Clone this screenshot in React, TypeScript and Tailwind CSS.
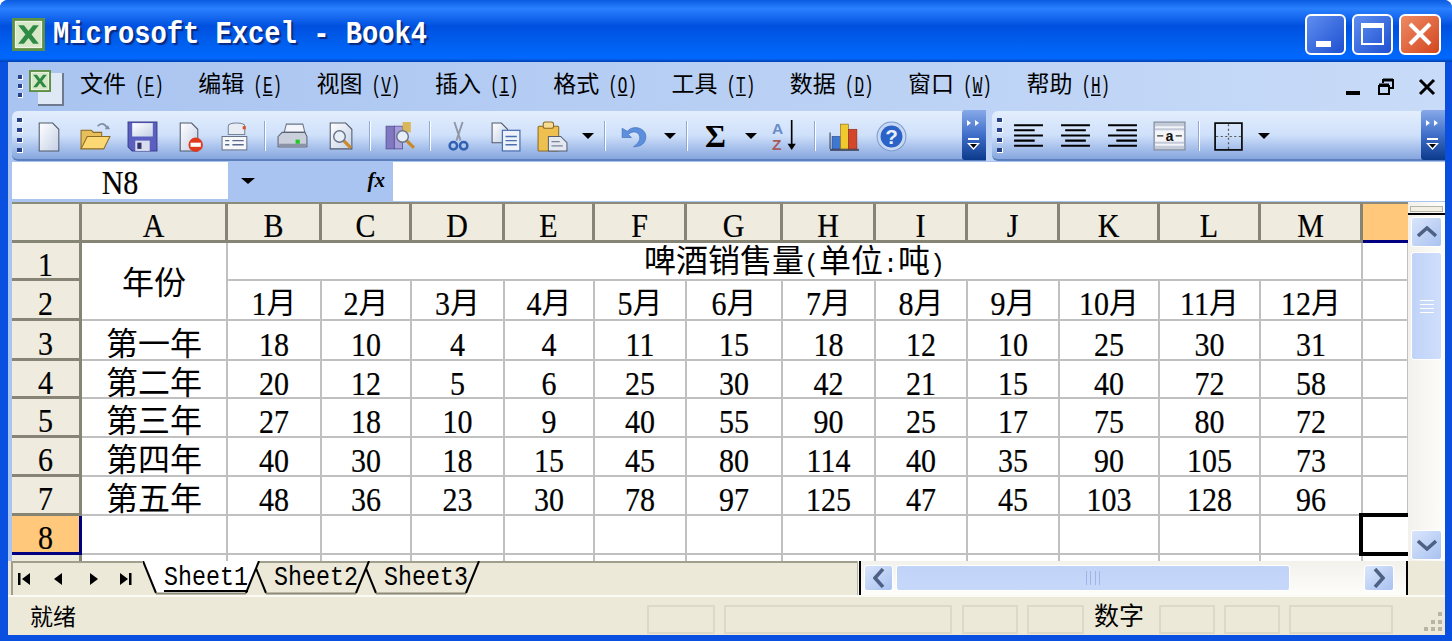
import type { ReactNode } from "react";

const data = [
  ["第一年", "18", "10", "4", "4", "11", "15", "18", "12", "10", "25", "30", "31"],
  ["第二年", "20", "12", "5", "6", "25", "30", "42", "21", "15", "40", "72", "58"],
  ["第三年", "27", "18", "10", "9", "40", "55", "90", "25", "17", "75", "80", "72"],
  ["第四年", "40", "30", "18", "15", "45", "80", "114", "40", "35", "90", "105", "73"],
  ["第五年", "48", "36", "23", "30", "78", "97", "125", "47", "45", "103", "128", "96"],
];
const columns = ["A", "B", "C", "D", "E", "F", "G", "H", "I", "J", "K", "L", "M"];
const months = ["1", "2", "3", "4", "5", "6", "7", "8", "9", "10", "11", "12"];
const menus = [
  ["文件", "F"],
  ["编辑", "E"],
  ["视图", "V"],
  ["插入", "I"],
  ["格式", "O"],
  ["工具", "T"],
  ["数据", "D"],
  ["窗口", "W"],
  ["帮助", "H"],
];

// SimSun-style latin: tall narrow letters
function Lat({ children }: { children: ReactNode }) {
  return (
    <span className="inline-block scale-y-[1.15] text-[30px] leading-none font-['Liberation_Serif',serif] [-webkit-text-stroke:0.2px_#000]">
      {children}
    </span>
  );
}

function Punct({ children }: { children: ReactNode }) {
  return <span className="inline-block text-[25px] leading-none">{children}</span>;
}

function Icon({ children, w = 33 }: { children: ReactNode; w?: number }) {
  return (
    <svg viewBox="0 0 16 16" width={w} height={w}>
      {children}
    </svg>
  );
}

function Slot({ children }: { children: ReactNode }) {
  return <div className="w-[47px] h-full pt-[2px] flex items-center justify-center shrink-0">{children}</div>;
}

function Sep({ className }: { className: string }) {
  return (
    <div className={`h-full pt-[2px] flex items-center justify-center shrink-0 ${className}`}>
      <div className="w-[2px] h-[30px] bg-[#8fa9d6] border-r border-white" />
    </div>
  );
}

function Arrow() {
  return (
    <div className="w-[23px] h-full pt-[2px] flex items-center justify-center shrink-0">
      <div className="w-0 h-0 border-x-[6px] border-x-transparent border-t-[6px] border-t-black" />
    </div>
  );
}

function Gripper() {
  return (
    <div className="w-[8px] ml-[5px] flex flex-col gap-[5px] shrink-0">
      {[0, 1, 2, 3].map((i) => (
        <div key={i} className="w-[6px] h-[5px] bg-[#27418a] border-r border-b border-white" />
      ))}
    </div>
  );
}

function Chevron() {
  return (
    <div className="ml-auto w-[24px] h-[50px] rounded-l-[3px] bg-linear-to-b from-[#87a9e8] via-[#3f6fc9] to-[#0a3a8c] flex flex-col items-center justify-between py-[9px] shrink-0">
      <svg width="16" height="8" viewBox="0 0 16 8">
        <path d="M1 1l4 3-4 3zM9 1l4 3-4 3z" fill="#fff" />
      </svg>
      <svg width="16" height="14" viewBox="0 0 16 14">
        <path d="M2 1h11v2H2z" fill="#fff" />
        <path d="M1 6h13l-6.500 7z" fill="#fff" />
        <path d="M4 7h7l-3.500 4z" fill="#000" />
      </svg>
    </div>
  );
}

function Doc({ x = 3, y = 1, w = 10, h = 14 }: { x?: number; y?: number; w?: number; h?: number }) {
  return (
    <path
      d={`M${x + 0.5} ${y + 0.5}h${w - 3.5}l3 3v${h - 3.5}h-${w - 0.5}z`}
      fill="url(#paper)"
      stroke="#50586a"
      strokeWidth=".5"
    />
  );
}

function ExcelLogo({ size }: { size: number }) {
  return (
    <svg viewBox="0 0 16 16" width={size} height={size}>
      <rect x=".7" y=".7" width="14.600" height="14.600" fill="#eef5e6" stroke="#5d8f46" strokeWidth="1.400" />
      <rect x="2" y="2" width="12" height="12" fill="#d6e8c8" />
      <path d="M3 3.500h2.800L8 6.300l2.200-2.800H13L9.500 8l3.500 4.500h-2.800L8 9.700l-2.200 2.800H3L6.500 8z" fill="#2f8a44" />
    </svg>
  );
}

function Magnifier({ cx, cy }: { cx: number; cy: number }) {
  return (
    <g>
      <path d={`M${cx + 2} ${cy + 2}l3.500 3.500`} stroke="#c98a2c" strokeWidth="1.600" />
      <circle cx={cx} cy={cy} r="2.800" fill="#e6eef8" stroke="#6a7488" strokeWidth=".7" />
    </g>
  );
}

function Toolbar1() {
  return (
    <div className="w-[974px] h-[50px] rounded-l-[6px] flex items-center bg-linear-to-b from-[#e3eefd] via-[#cfe0fa] to-[#86a6de] border-b-2 border-[#5c7fbd] shrink-0">
      <Gripper />
      <Slot>
        <Icon>
          <Doc w={10} />
        </Icon>
      </Slot>
      <Slot>
        <Icon>
          <path d="M1 14V5h5l1 1h4v2" fill="#e7bf5a" stroke="#8b6a23" strokeWidth=".5" />
          <path d="M1 14l3-6h11l-3 6z" fill="#fbd873" stroke="#8b6a23" strokeWidth=".5" />
          <path d="M9 3c2-2 4-1 4.500 1" fill="none" stroke="#7f8ea8" strokeWidth=".8" />
          <path d="M12.500 4.500h2.500l-1 -2z" fill="#7f8ea8" />
        </Icon>
      </Slot>
      <Slot>
        <Icon>
          <path d="M1 1h14v14H3l-2-2z" fill="#5a5fc0" stroke="#3a3d8a" strokeWidth=".5" />
          <rect x="3" y="1.500" width="10" height="6.500" fill="url(#paper)" />
          <rect x="4.500" y="10" width="7" height="5" fill="#d8dcec" />
          <rect x="5.500" y="11" width="2" height="3" fill="#30336e" />
        </Icon>
      </Slot>
      <Slot>
        <Icon>
          <Doc w={9} />
          <circle cx="11" cy="12" r="3.500" fill="#dd3a1e" />
          <rect x="8.500" y="11" width="5" height="2" fill="#fff" />
        </Icon>
      </Slot>
      <Slot>
        <Icon>
          <path d="M4 7V3c0-2 8-2 8 0v4z" fill="#e8ecf4" stroke="#7a8498" strokeWidth=".5" />
          <rect x="11" y="3" width="1.500" height="1.500" fill="#d9502a" />
          <rect x="1" y="8" width="12" height="6.500" fill="#f5f7fb" stroke="#6a7488" strokeWidth=".5" />
          <path d="M2.500 10h2M2.500 12h2M6 10h5.500M6 12h5.500" stroke="#5a6a8a" strokeWidth=".7" />
        </Icon>
      </Slot>
      <Sep className="w-[9px]" />
      <Slot>
        <Icon>
          <path d="M4 6l1-4h8l1 4z" fill="#f3f5fa" stroke="#6a7488" strokeWidth=".5" />
          <path d="M1 8l2-2h11l1 2v5H1z" fill="#c9cfdb" stroke="#5a6274" strokeWidth=".5" />
          <rect x="1.500" y="11.500" width="13" height="2" fill="#8b93a6" />
          <rect x="9.500" y="9.500" width="2" height="2" fill="#21c821" />
        </Icon>
      </Slot>
      <Slot>
        <Icon>
          <Doc w={11} h={13} />
          <Magnifier cx={8} cy={8} />
        </Icon>
      </Slot>
      <Sep className="w-[14px]" />
      <Slot>
        <Icon>
          <rect x="1" y="3" width="4" height="11" fill="#8078c0" stroke="#564f94" strokeWidth=".4" />
          <rect x="5" y="3" width="4" height="11" fill="#a79fda" stroke="#564f94" strokeWidth=".4" />
          <path d="M9 1h4v5H9z" fill="#d9b65a" />
          <Magnifier cx={9} cy={8} />
        </Icon>
      </Slot>
      <Sep className="w-[11px]" />
      <Slot>
        <Icon>
          <path d="M6 1L9 10M10 1L7 10" fill="none" stroke="#8d95a6" strokeWidth=".9" />
          <circle cx="5.500" cy="12.500" r="1.800" fill="none" stroke="#3060b0" strokeWidth="1.200" />
          <circle cx="10.500" cy="12.500" r="1.800" fill="none" stroke="#3060b0" strokeWidth="1.200" />
        </Icon>
      </Slot>
      <Slot>
        <Icon>
          <Doc x={1} y={1} w={8} h={10} />
          <rect x="6.500" y="5" width="8.500" height="10" fill="#eef3fb" stroke="#4a6fb0" strokeWidth=".6" />
          <path d="M8 8h5.500M8 10h5.500M8 12h5.500" stroke="#4a6fb0" strokeWidth=".7" />
        </Icon>
      </Slot>
      <Slot>
        <Icon>
          <rect x="1" y="3" width="10" height="12" rx=".5" fill="#eec04f" stroke="#8b6a23" strokeWidth=".5" />
          <rect x="3.500" y="1" width="5" height="3" rx="1" fill="#f6dc94" stroke="#8b6a23" strokeWidth=".5" />
          <path d="M6 8h6l3 3v4H6z" fill="#e3e8f1" stroke="#555d70" strokeWidth=".5" />
          <path d="M7.500 10.500h4M7.500 12.500h5.500" stroke="#7a8498" strokeWidth=".6" />
        </Icon>
      </Slot>
      <Arrow />
      <Sep className="w-[12px]" />
      <Slot>
        <Icon>
          <path d="M2 4v4.500h4.500L5 7c2-2 5-1.500 5.500 1 .4 2-1 3.500-3 5 4 0 6-2 6-5 0-4-6-6-9-2.500z" fill="#5c8fdd" stroke="#3c68b5" strokeWidth=".3" />
        </Icon>
      </Slot>
      <Arrow />
      <Sep className="w-[11px]" />
      <Slot>
        <span className="text-[32px] leading-none font-bold font-['Liberation_Serif',serif]">Σ</span>
      </Slot>
      <Arrow />
      <div className="w-[46px] h-full pt-[2px] flex items-center justify-center shrink-0">
        <Icon>
          <text x="1.500" y="7" fontSize="7.500" fontWeight="bold" fontFamily="Liberation Sans" fill="#6a8cc8">A</text>
          <text x="1.500" y="14.500" fontSize="7.500" fontWeight="bold" fontFamily="Liberation Sans" fill="#a85a5a">Z</text>
          <path d="M11 0v13" stroke="#000" strokeWidth=".8" />
          <path d="M9 11.500h4l-2 3z" fill="#000" />
        </Icon>
      </div>
      <Sep className="w-[13px]" />
      <Slot>
        <Icon>
          <path d="M1 14.500h14" stroke="#4a5266" strokeWidth="1" />
          <path d="M1 14V6" stroke="#4a5266" strokeWidth=".6" />
          <rect x="2" y="8" width="4" height="6" fill="#3f78d0" stroke="#27418a" strokeWidth=".3" />
          <rect x="6" y="2" width="4" height="12" fill="#f0c92e" stroke="#8b6a23" strokeWidth=".3" />
          <rect x="10" y="4.500" width="4" height="9.500" fill="#d4472a" stroke="#8a2a18" strokeWidth=".3" />
        </Icon>
      </Slot>
      <Slot>
        <Icon>
          <circle cx="8" cy="8" r="7" fill="#c9d8f2" stroke="#7a9ad0" strokeWidth=".5" />
          <circle cx="8" cy="8" r="5.300" fill="#2a62c8" />
          <text x="8" y="11.500" fontSize="10" fontWeight="bold" fontFamily="Liberation Sans" textAnchor="middle" fill="#e8f0ff">?</text>
        </Icon>
      </Slot>
      <Chevron />
    </div>
  );
}

function AlignLines({ kind }: { kind: "l" | "c" | "r" }) {
  const shortStart = kind === "l" ? 1 : kind === "c" ? 3 : 5;
  return (
    <Icon>
      <path
        d={`M1 2.500h14M${shortStart} 5h10M1 7.500h14M${shortStart} 10h10M1 12.500h14`}
        stroke="#000"
        strokeWidth="1"
      />
    </Icon>
  );
}

function Toolbar2() {
  return (
    <div className="flex-1 h-[50px] rounded-l-[6px] flex items-center bg-linear-to-b from-[#e3eefd] via-[#cfe0fa] to-[#86a6de] border-b-2 border-[#5c7fbd]">
      <Gripper />
      <Slot>
        <AlignLines kind="l" />
      </Slot>
      <Slot>
        <AlignLines kind="c" />
      </Slot>
      <Slot>
        <AlignLines kind="r" />
      </Slot>
      <Slot>
        <Icon>
          <rect x=".5" y="1" width="15" height="13.500" fill="#c3cad8" stroke="#7d8596" strokeWidth=".5" />
          <path d="M1 3.500h14M1 12h14" stroke="#f2f4f8" strokeWidth="1" />
          <rect x="1" y="5" width="14" height="5.500" fill="#f4f6fa" />
          <path d="M2 7.700h3M11 7.700h3" stroke="#333" strokeWidth=".7" />
          <text x="8" y="10.200" fontSize="7" fontWeight="bold" fontFamily="Liberation Mono" textAnchor="middle" fill="#111">a</text>
        </Icon>
      </Slot>
      <Sep className="w-[12px]" />
      <Slot>
        <Icon>
          <rect x="1.500" y="1.500" width="13" height="13" fill="none" stroke="#000" strokeWidth=".8" />
          <path d="M8 2v12M2 8h12" stroke="#555" strokeWidth=".6" strokeDasharray="1 1.200" />
        </Icon>
      </Slot>
      <Arrow />
      <Chevron />
    </div>
  );
}

function Cell({ children, className = "" }: { children?: ReactNode; className?: string }) {
  return (
    <div className={`flex items-center justify-center border-r-2 border-b-2 border-[#c0c0c0] ${className}`}>
      {children}
    </div>
  );
}

function RowHead({ n, active }: { n: number; active?: boolean }) {
  return (
    <div
      className={`flex items-center justify-center pt-[6px] border-r-[3px] border-b-[3px] ${
        active ? "bg-[#ffc87a] border-[#000080]" : "bg-[#efecdf] border-[#868474]"
      }`}
    >
      <Lat>{n}</Lat>
    </div>
  );
}

function ColHead({ label }: { label: string }) {
  return (
    <div className="flex items-center justify-center pt-[6px] bg-[#efecdf] border-r-[3px] border-b-[3px] border-[#868474]">
      <Lat>{label}</Lat>
    </div>
  );
}

function SheetGrid() {
  return (
    <div className="w-[1400px] h-full pl-[4px] bg-[#a9c4f0] overflow-hidden shrink-0">
      <div className="h-full bg-white border-t-2 border-[#8c8a78] grid grid-cols-[70px_146px_94px_90px_93px_90px_92px_96px_93px_92px_92px_100px_101px_102px_46px] grid-rows-[39px_38px_40px_40px_38px_39px_39px_39px_39px_6px]">
        <div className="bg-[#efecdf] border-r-[3px] border-b-[3px] border-[#868474]" />
        {columns.map((c) => (
          <ColHead key={c} label={c} />
        ))}
        <div className="bg-[#ffc87a] border-b-[3px] border-[#000080]" />

        <RowHead n={1} />
        <Cell className="row-span-2 text-[32px] leading-none pt-[10px]">年份</Cell>
        <Cell className="col-span-12 text-[32px] leading-none pt-[5px]">
          <span>
            啤酒销售量<Punct>(</Punct>单位<Punct>:</Punct>吨<Punct>)</Punct>
          </span>
        </Cell>
        <Cell />

        <RowHead n={2} />
        {months.map((m) => (
          <Cell key={m} className="text-[30px] leading-none pt-[8px]">
            <span>
              <Lat>{m}</Lat>月
            </span>
          </Cell>
        ))}
        <Cell />

        {data.map((row, i) => (
          <div key={row[0]} className="contents">
            <RowHead n={i + 3} />
            {row.map((v, j) =>
              j === 0 ? (
                <Cell key={j} className="text-[32px] leading-none pt-[13px]">
                  {v}
                </Cell>
              ) : (
                <Cell key={j} className="pt-[7px]">
                  <Lat>{v}</Lat>
                </Cell>
              ),
            )}
            <Cell />
          </div>
        ))}

        <RowHead n={8} active />
        {months.map((m) => (
          <Cell key={m} />
        ))}
        <Cell />
        <div className="relative bg-white border-b-2 border-[#c0c0c0]">
          <div className="absolute -left-[4px] -top-[3px] w-[60px] h-[43px] border-4 border-black" />
        </div>

        <div className="bg-[#efecdf] border-r-[3px] border-[#868474]" />
        {columns.map((c) => (
          <div key={c} className="border-r-2 border-[#c0c0c0]" />
        ))}
        <div />
      </div>
    </div>
  );
}

function ScrollBtn({ children, className = "" }: { children: ReactNode; className?: string }) {
  return (
    <div className={`rounded-[3px] border border-white bg-linear-to-br from-[#d9e5fb] to-[#a9c2f0] flex items-center justify-center shrink-0 ${className}`}>
      {children}
    </div>
  );
}

function VerticalScroll() {
  return (
    <div className="flex-1 bg-linear-to-r from-[#f3f1ec] to-[#fdfdfa] flex flex-col items-center">
      <div className="w-full h-[13px] border-b-[2px] border-black">
        <div className="mt-[4px] mx-[2px] h-[6px] bg-[#f2efe4] border border-[#b8b5a4]" />
      </div>
      <ScrollBtn className="w-[31px] h-[30px] mt-[2px]">
        <svg width="20" height="12" viewBox="0 0 20 12">
          <path d="M1 10l9-8 9 8" fill="none" stroke="#4d6185" strokeWidth="3.500" />
        </svg>
      </ScrollBtn>
      <div className="w-[31px] h-[108px] mt-[5px] rounded-[3px] border border-white bg-linear-to-r from-[#c0d3f8] to-[#cfdefb] flex items-center justify-center">
        <div className="w-[14px] h-[13px] flex flex-col justify-between">
          {[0, 1, 2, 3].map((i) => (
            <div key={i} className="h-[1px] bg-[#9fb6e4] border-b border-white" />
          ))}
        </div>
      </div>
      <ScrollBtn className="w-[31px] h-[30px] mt-auto mb-[1px]">
        <svg width="20" height="12" viewBox="0 0 20 12">
          <path d="M1 2l9 8 9-8" fill="none" stroke="#4d6185" strokeWidth="3.500" />
        </svg>
      </ScrollBtn>
    </div>
  );
}

function SheetTab({ label, active, className }: { label: string; active?: boolean; className: string }) {
  return (
    <div className={`relative h-[34px] w-[118px] flex items-start justify-center pl-[8px] pt-[5px] ${className}`}>
      <svg className="absolute inset-0" width="118" height="34" viewBox="0 0 118 34">
        <path d="M0 0L13 32H103L116 0" fill={active ? "#fff" : "#ece9d8"} />
        {!active && <path d="M3 1H118" stroke="#a09e8c" strokeWidth="2" />}
        <path d="M0 0L13 32" stroke="#000" strokeWidth="2" />
        <path d="M13 32.500H103" stroke="#8c8a78" strokeWidth="2" />
        <path d="M103 32L116 0" stroke="#000" strokeWidth="2" />
      </svg>
      <span className={`relative block text-[23.3px] leading-[24px] ${active ? "border-b-2 border-black" : ""}`}>
        <span className="block scale-y-[1.15]">{label}</span>
      </span>
    </div>
  );
}

function TabNav() {
  return (
    <div className="w-[132px] h-full border-l-[2px] border-t-[2px] border-[#a09e8c] flex items-center shrink-0">
      <svg width="130" height="16" viewBox="0 0 130 16">
        <path d="M5 2h2.500v12H5zM17 2v12l-8-6z" />
        <path d="M49 2v12l-8-6z" />
        <path d="M77 2v12l8-6z" />
        <path d="M107 2v12l8-6zM116 2h2.500v12H116z" />
      </svg>
    </div>
  );
}

function TabRow() {
  return (
    <div className="h-[34px] pl-[3px] bg-[#ece9d8] flex overflow-hidden shrink-0">
      <TabNav />
      <SheetTab label="Sheet1" active className="z-30" />
      <SheetTab label="Sheet2" className="-ml-[8px] z-20" />
      <SheetTab label="Sheet3" className="-ml-[8px] z-10" />
      <div className="flex-1 border-t-2 border-[#a09e8c]" />
      <div className="w-[4px] h-full bg-[#f5f4ee] border-l border-[#b8b5a4] border-r-2 border-r-black shrink-0" />
      <div className="w-[545px] h-full py-[4px] pl-[3px] bg-linear-to-b from-[#f3f1ec] to-[#fdfdfa] flex items-stretch shrink-0">
        <ScrollBtn className="w-[29px]">
          <svg width="12" height="20" viewBox="0 0 12 20">
            <path d="M10 1l-8 9 8 9" fill="none" stroke="#4d6185" strokeWidth="3.500" />
          </svg>
        </ScrollBtn>
        <div className="w-[394px] ml-[3px] rounded-[3px] border border-white bg-linear-to-b from-[#c0d3f8] to-[#c6d8fa] flex items-center justify-center shrink-0">
          <div className="w-[14px] h-[14px] flex justify-between">
            {[0, 1, 2, 3].map((i) => (
              <div key={i} className="w-[1px] h-full bg-[#9fb6e4]" />
            ))}
          </div>
        </div>
        <ScrollBtn className="w-[30px] ml-auto mr-[12px]">
          <svg width="12" height="20" viewBox="0 0 12 20">
            <path d="M2 1l8 9-8 9" fill="none" stroke="#4d6185" strokeWidth="3.500" />
          </svg>
        </ScrollBtn>
      </div>
      <div className="w-[2px] h-full bg-black shrink-0" />
      <div className="w-[37px] shrink-0" />
    </div>
  );
}

function StatusBar() {
  return (
    <div className="h-[40px] pt-[6px] bg-[#ece9d8] border-t-2 border-[#fbfaf5] flex items-center pl-[22px] pr-[1px] shrink-0">
      <span className="text-[23px] w-[617px] shrink-0">就绪</span>
      <div className="h-[29px] w-[68px] border-2 border-[#dcd9c8] shrink-0" />
      <div className="h-[29px] w-[228px] ml-[9px] border-2 border-[#dcd9c8] shrink-0" />
      <div className="h-[29px] w-[56px] ml-[10px] border-2 border-[#dcd9c8] shrink-0" />
      <div className="h-[29px] w-[57px] ml-[9px] border-2 border-[#dcd9c8] shrink-0" />
      <div className="h-[29px] w-[54px] ml-[8px] text-[25px] flex items-center justify-center shrink-0">数字</div>
      <div className="h-[29px] w-[56px] ml-[13px] border-2 border-[#dcd9c8] shrink-0" />
      <div className="h-[29px] w-[56px] ml-[9px] border-2 border-[#dcd9c8] shrink-0" />
      <div className="h-[29px] w-[104px] ml-[9px] border-2 border-[#dcd9c8] shrink-0" />
      <svg className="ml-auto self-end mb-[2px]" width="22" height="22" viewBox="0 0 22 22">
        <path d="M16 1h4v4h-4zM9 9h4v4H9zM16 9h4v4h-4zM2 16h4v4H2zM9 16h4v4H9zM16 16h4v4h-4z" fill="#b8b5a4" />
      </svg>
    </div>
  );
}

export default function App() {
  return (
    <div className="w-[1452px] h-[641px] flex flex-col overflow-hidden rounded-t-[8px] bg-[#0a50e0] text-black font-['Liberation_Mono','Noto_Sans_CJK_SC',monospace]">
      <svg width="0" height="0" className="absolute">
        <defs>
          <linearGradient id="paper" x1="0" y1="0" x2="1" y2="1">
            <stop offset="0" stopColor="#ffffff" />
            <stop offset="1" stopColor="#c4d0e6" />
          </linearGradient>
        </defs>
      </svg>

      {/* title bar */}
      <div className="h-[62px] pt-[6px] flex items-center pl-[12px] pr-[11px] bg-[linear-gradient(#0a5be0_0%,#2a80ff_14%,#0050df_42%,#0060f0_72%,#0068ff_94%,#0040b0_100%)] shrink-0">
        <ExcelLogo size={33} />
        <span className="ml-[8px] pt-[2px] text-[27.100px] font-bold text-white [text-shadow:2px_2px_1px_#0a2a80]">
          <span className="inline-block scale-y-[1.15]">Microsoft Excel - Book4</span>
        </span>
        <div className="ml-auto flex gap-[6px]">
          <div className="w-[41px] h-[41px] rounded-[6px] border-2 border-white bg-linear-to-br from-[#5f8df0] to-[#1f4fd0] flex items-end pl-[9px] pb-[6px]">
            <div className="w-[15px] h-[6px] bg-white" />
          </div>
          <div className="w-[41px] h-[41px] rounded-[6px] border-2 border-white bg-linear-to-br from-[#5f8df0] to-[#1f4fd0] flex items-center justify-center">
            <div className="w-[23px] h-[22px] border-2 border-t-[5px] border-white" />
          </div>
          <div className="w-[42px] h-[41px] rounded-[6px] border-2 border-white bg-linear-to-br from-[#ee8a62] to-[#d2441a] flex items-center justify-center">
            <svg width="24" height="24" viewBox="0 0 24 24">
              <path d="M2 2l20 20M22 2L2 22" stroke="#fff" strokeWidth="4" />
            </svg>
          </div>
        </div>
      </div>

      <div className="flex-1 flex flex-col min-h-0 border-l-[8px] border-r-[7px] border-b-[6px] border-[#0a50e0]">
        <div className="bg-linear-to-r from-[#a9c4f0] to-[#c8dbf8] shrink-0">
          {/* menu bar */}
          <div className="h-[49px] flex items-center relative">
            <div className="ml-[10px] w-[6px] flex flex-col gap-[4px] shrink-0">
              {[0, 1, 2].map((i) => (
                <div key={i} className="w-[5px] h-[5px] bg-[#27418a] border-r border-b border-white" />
              ))}
            </div>
            <div className="relative w-[38px] h-[38px] ml-[3px] shrink-0">
              <div className="absolute right-[1px] bottom-0 w-[26px] h-[33px] bg-[#dfe8f5] border-r-2 border-b-2 border-[#6d7a90]" />
              <div className="absolute left-[2px] top-[2px]">
                <ExcelLogo size={22} />
              </div>
            </div>
            <div className="flex ml-[15px]">
              {menus.map(([label, key]) => (
                <div key={key} className="w-[118.300px] flex items-center shrink-0">
                  <span className="text-[23px]">{label}</span>
                  <span className="ml-[9px] text-[16px] inline-block scale-y-[1.5]">
                    (<span className="underline">{key}</span>)
                  </span>
                </div>
              ))}
            </div>
            <div className="ml-auto flex items-center gap-[17px] pr-[9px]">
              <div className="w-[14px] h-[4px] bg-black mt-[12px]" />
              <svg width="18" height="18" viewBox="0 0 18 18">
                <path d="M6 5V2h10v8h-4M2 8h10v8H2z" fill="none" stroke="#000" strokeWidth="2" />
                <path d="M6 2h10M2 7h10" stroke="#000" strokeWidth="3" />
              </svg>
              <svg className="ml-[6px]" width="18" height="18" viewBox="0 0 18 18">
                <path d="M2 2l14 14M16 2L2 16" stroke="#000" strokeWidth="3" />
              </svg>
            </div>
          </div>
          {/* toolbars */}
          <div className="h-[50px] pl-[4px] flex gap-[6px]">
            <Toolbar1 />
            <Toolbar2 />
          </div>
        </div>

        {/* formula bar */}
        <div className="h-[41px] pt-[1px] pl-[4px] flex bg-[#a9c4f0] shrink-0">
          <div className="w-[216px] h-[37px] pt-[3px] bg-white flex items-center justify-center">
            <Lat>N8</Lat>
          </div>
          <div className="w-[165px] h-[37px] flex items-center justify-between pl-[13px] pr-[8px]">
            <div className="w-0 h-0 border-x-[7px] border-x-transparent border-t-[6px] border-t-black" />
            <span className="italic font-bold text-[21px] font-['Liberation_Serif',serif]">fx</span>
          </div>
          <div className="flex-1 h-[39px] bg-white" />
        </div>

        {/* sheet */}
        <div className="flex-1 flex min-h-0 bg-[#a9c4f0]">
          <SheetGrid />
          <VerticalScroll />
        </div>

        <TabRow />
        <StatusBar />
      </div>
    </div>
  );
}
